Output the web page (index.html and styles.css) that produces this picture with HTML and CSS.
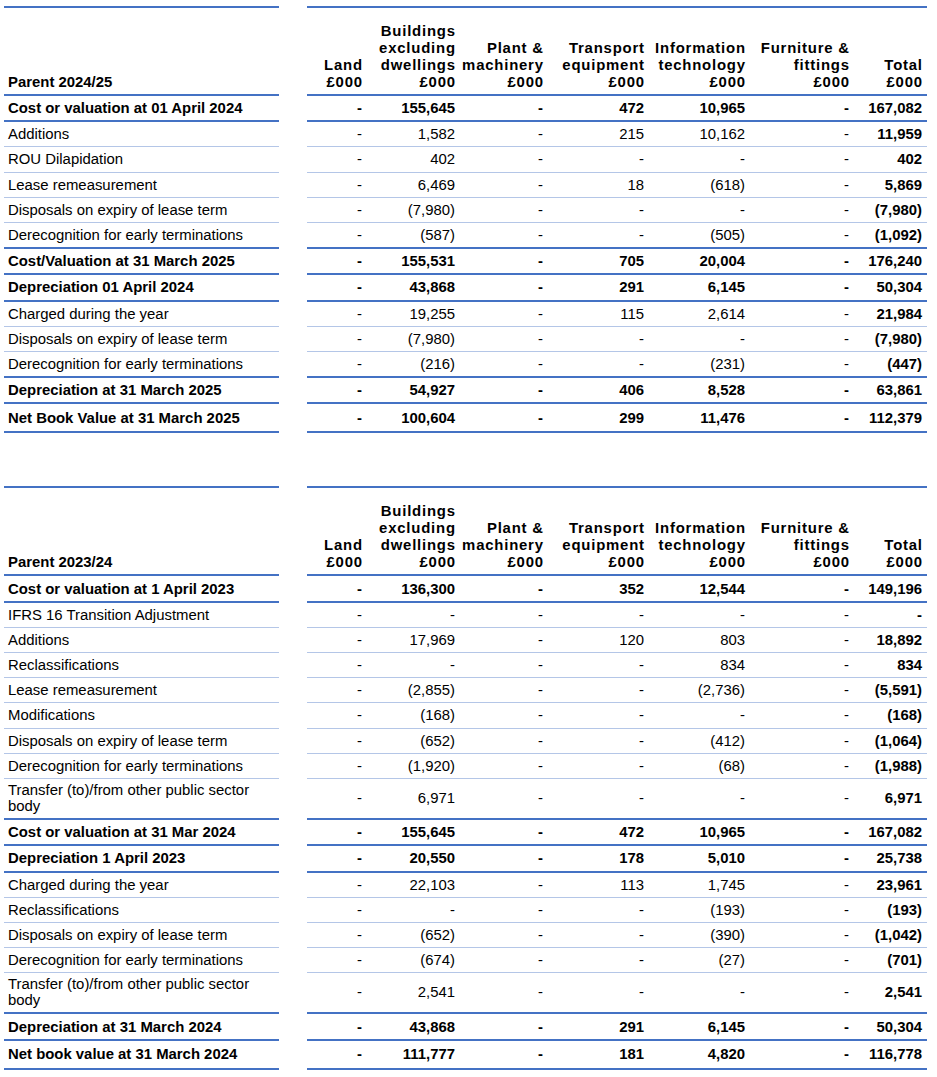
FILE: index.html
```html
<!DOCTYPE html>
<html lang="en">
<head>
<meta charset="utf-8">
<title>Parent right of use assets</title>
<link rel="stylesheet" href="styles.css">
</head>
<body>
<table class="tbl">
  <colgroup>
    <col class="c-lbl"><col class="c-sp"><col class="c-land"><col class="c-bld"><col class="c-plant"><col class="c-trans"><col class="c-it"><col class="c-furn"><col class="c-tot">
  </colgroup>
  <thead>
    <tr>
      <th class="lbl">Parent 2024/25</th><th class="sp"></th>
      <th class="num hd">Land<br>£000</th>
      <th class="num hd">Buildings<br>excluding<br>dwellings<br>£000</th>
      <th class="num hd">Plant &amp;<br>machinery<br>£000</th>
      <th class="num hd">Transport<br>equipment<br>£000</th>
      <th class="num hd">Information<br>technology<br>£000</th>
      <th class="num hd">Furniture &amp;<br>fittings<br>£000</th>
      <th class="num hd">Total<br>£000</th>
    </tr>
  </thead>
  <tbody>
    <tr class="b k"><td class="lbl">Cost or valuation at 01 April 2024</td><td class="sp"></td><td class="num">-</td><td class="num">155,645</td><td class="num">-</td><td class="num">472</td><td class="num">10,965</td><td class="num">-</td><td class="num t">167,082</td></tr>
    <tr><td class="lbl">Additions</td><td class="sp"></td><td class="num">-</td><td class="num">1,582</td><td class="num">-</td><td class="num">215</td><td class="num">10,162</td><td class="num">-</td><td class="num t">11,959</td></tr>
    <tr><td class="lbl">ROU Dilapidation</td><td class="sp"></td><td class="num">-</td><td class="num">402</td><td class="num">-</td><td class="num">-</td><td class="num">-</td><td class="num">-</td><td class="num t">402</td></tr>
    <tr><td class="lbl">Lease remeasurement</td><td class="sp"></td><td class="num">-</td><td class="num">6,469</td><td class="num">-</td><td class="num">18</td><td class="num">(618)</td><td class="num">-</td><td class="num t">5,869</td></tr>
    <tr><td class="lbl">Disposals on expiry of lease term</td><td class="sp"></td><td class="num">-</td><td class="num">(7,980)</td><td class="num">-</td><td class="num">-</td><td class="num">-</td><td class="num">-</td><td class="num t">(7,980)</td></tr>
    <tr class="k"><td class="lbl">Derecognition for early terminations</td><td class="sp"></td><td class="num">-</td><td class="num">(587)</td><td class="num">-</td><td class="num">-</td><td class="num">(505)</td><td class="num">-</td><td class="num t">(1,092)</td></tr>
    <tr class="b k"><td class="lbl">Cost/Valuation at 31 March 2025</td><td class="sp"></td><td class="num">-</td><td class="num">155,531</td><td class="num">-</td><td class="num">705</td><td class="num">20,004</td><td class="num">-</td><td class="num t">176,240</td></tr>
    <tr class="b k"><td class="lbl">Depreciation 01 April 2024</td><td class="sp"></td><td class="num">-</td><td class="num">43,868</td><td class="num">-</td><td class="num">291</td><td class="num">6,145</td><td class="num">-</td><td class="num t">50,304</td></tr>
    <tr><td class="lbl">Charged during the year</td><td class="sp"></td><td class="num">-</td><td class="num">19,255</td><td class="num">-</td><td class="num">115</td><td class="num">2,614</td><td class="num">-</td><td class="num t">21,984</td></tr>
    <tr><td class="lbl">Disposals on expiry of lease term</td><td class="sp"></td><td class="num">-</td><td class="num">(7,980)</td><td class="num">-</td><td class="num">-</td><td class="num">-</td><td class="num">-</td><td class="num t">(7,980)</td></tr>
    <tr class="k"><td class="lbl">Derecognition for early terminations</td><td class="sp"></td><td class="num">-</td><td class="num">(216)</td><td class="num">-</td><td class="num">-</td><td class="num">(231)</td><td class="num">-</td><td class="num t">(447)</td></tr>
    <tr class="b k"><td class="lbl">Depreciation at 31 March 2025</td><td class="sp"></td><td class="num">-</td><td class="num">54,927</td><td class="num">-</td><td class="num">406</td><td class="num">8,528</td><td class="num">-</td><td class="num t">63,861</td></tr>
    <tr class="b k last"><td class="lbl">Net Book Value at 31 March 2025</td><td class="sp"></td><td class="num">-</td><td class="num">100,604</td><td class="num">-</td><td class="num">299</td><td class="num">11,476</td><td class="num">-</td><td class="num t">112,379</td></tr>
  </tbody>
</table>

<table class="tbl">
  <colgroup>
    <col class="c-lbl"><col class="c-sp"><col class="c-land"><col class="c-bld"><col class="c-plant"><col class="c-trans"><col class="c-it"><col class="c-furn"><col class="c-tot">
  </colgroup>
  <thead>
    <tr>
      <th class="lbl">Parent 2023/24</th><th class="sp"></th>
      <th class="num hd">Land<br>£000</th>
      <th class="num hd">Buildings<br>excluding<br>dwellings<br>£000</th>
      <th class="num hd">Plant &amp;<br>machinery<br>£000</th>
      <th class="num hd">Transport<br>equipment<br>£000</th>
      <th class="num hd">Information<br>technology<br>£000</th>
      <th class="num hd">Furniture &amp;<br>fittings<br>£000</th>
      <th class="num hd">Total<br>£000</th>
    </tr>
  </thead>
  <tbody>
    <tr class="b k"><td class="lbl">Cost or valuation at 1 April 2023</td><td class="sp"></td><td class="num">-</td><td class="num">136,300</td><td class="num">-</td><td class="num">352</td><td class="num">12,544</td><td class="num">-</td><td class="num t">149,196</td></tr>
    <tr><td class="lbl">IFRS 16 Transition Adjustment</td><td class="sp"></td><td class="num">-</td><td class="num">-</td><td class="num">-</td><td class="num">-</td><td class="num">-</td><td class="num">-</td><td class="num t">-</td></tr>
    <tr><td class="lbl">Additions</td><td class="sp"></td><td class="num">-</td><td class="num">17,969</td><td class="num">-</td><td class="num">120</td><td class="num">803</td><td class="num">-</td><td class="num t">18,892</td></tr>
    <tr><td class="lbl">Reclassifications</td><td class="sp"></td><td class="num">-</td><td class="num">-</td><td class="num">-</td><td class="num">-</td><td class="num">834</td><td class="num">-</td><td class="num t">834</td></tr>
    <tr><td class="lbl">Lease remeasurement</td><td class="sp"></td><td class="num">-</td><td class="num">(2,855)</td><td class="num">-</td><td class="num">-</td><td class="num">(2,736)</td><td class="num">-</td><td class="num t">(5,591)</td></tr>
    <tr><td class="lbl">Modifications</td><td class="sp"></td><td class="num">-</td><td class="num">(168)</td><td class="num">-</td><td class="num">-</td><td class="num">-</td><td class="num">-</td><td class="num t">(168)</td></tr>
    <tr><td class="lbl">Disposals on expiry of lease term</td><td class="sp"></td><td class="num">-</td><td class="num">(652)</td><td class="num">-</td><td class="num">-</td><td class="num">(412)</td><td class="num">-</td><td class="num t">(1,064)</td></tr>
    <tr><td class="lbl">Derecognition for early terminations</td><td class="sp"></td><td class="num">-</td><td class="num">(1,920)</td><td class="num">-</td><td class="num">-</td><td class="num">(68)</td><td class="num">-</td><td class="num t">(1,988)</td></tr>
    <tr class="k two"><td class="lbl">Transfer (to)/from other public sector body</td><td class="sp"></td><td class="num">-</td><td class="num">6,971</td><td class="num">-</td><td class="num">-</td><td class="num">-</td><td class="num">-</td><td class="num t">6,971</td></tr>
    <tr class="b k"><td class="lbl">Cost or valuation at 31 Mar 2024</td><td class="sp"></td><td class="num">-</td><td class="num">155,645</td><td class="num">-</td><td class="num">472</td><td class="num">10,965</td><td class="num">-</td><td class="num t">167,082</td></tr>
    <tr class="b k"><td class="lbl">Depreciation 1 April 2023</td><td class="sp"></td><td class="num">-</td><td class="num">20,550</td><td class="num">-</td><td class="num">178</td><td class="num">5,010</td><td class="num">-</td><td class="num t">25,738</td></tr>
    <tr><td class="lbl">Charged during the year</td><td class="sp"></td><td class="num">-</td><td class="num">22,103</td><td class="num">-</td><td class="num">113</td><td class="num">1,745</td><td class="num">-</td><td class="num t">23,961</td></tr>
    <tr><td class="lbl">Reclassifications</td><td class="sp"></td><td class="num">-</td><td class="num">-</td><td class="num">-</td><td class="num">-</td><td class="num">(193)</td><td class="num">-</td><td class="num t">(193)</td></tr>
    <tr><td class="lbl">Disposals on expiry of lease term</td><td class="sp"></td><td class="num">-</td><td class="num">(652)</td><td class="num">-</td><td class="num">-</td><td class="num">(390)</td><td class="num">-</td><td class="num t">(1,042)</td></tr>
    <tr><td class="lbl">Derecognition for early terminations</td><td class="sp"></td><td class="num">-</td><td class="num">(674)</td><td class="num">-</td><td class="num">-</td><td class="num">(27)</td><td class="num">-</td><td class="num t">(701)</td></tr>
    <tr class="k two"><td class="lbl">Transfer (to)/from other public sector body</td><td class="sp"></td><td class="num">-</td><td class="num">2,541</td><td class="num">-</td><td class="num">-</td><td class="num">-</td><td class="num">-</td><td class="num t">2,541</td></tr>
    <tr class="b k"><td class="lbl">Depreciation at 31 March 2024</td><td class="sp"></td><td class="num">-</td><td class="num">43,868</td><td class="num">-</td><td class="num">291</td><td class="num">6,145</td><td class="num">-</td><td class="num t">50,304</td></tr>
    <tr class="b k last"><td class="lbl">Net book value at 31 March 2024</td><td class="sp"></td><td class="num">-</td><td class="num">111,777</td><td class="num">-</td><td class="num">181</td><td class="num">4,820</td><td class="num">-</td><td class="num t">116,778</td></tr>
  </tbody>
</table>
</body>
</html>
```

FILE: styles.css
```css
body {
  margin: 0;
  padding: 6px 0 0 4px;
  background: #ffffff;
  color: #000000;
  font-family: "Liberation Sans", Arial, sans-serif;
  font-size: 14.9px;
}

.tbl {
  border-collapse: separate;
  border-spacing: 0;
  table-layout: fixed;
  width: 923px;
}

.tbl + .tbl {
  margin-top: 53px;
}

.c-lbl { width: 275px; }
.c-sp { width: 28px; }
.c-land { width: 60px; }
.c-bld { width: 93px; }
.c-plant { width: 88px; }
.c-trans { width: 101px; }
.c-it { width: 101px; }
.c-furn { width: 104px; }
.c-tot { width: 73px; }

.tbl td {
  padding: 4.1px 5px 4.1px 4px;
  line-height: 16px;
  border-bottom: 1px solid #b4c6e7;
  vertical-align: middle;
  white-space: normal;
}

.tbl td.num {
  text-align: right;
  padding-right: 5px;
  padding-left: 2px;
  white-space: nowrap;
}

.tbl td.lbl {
  padding-left: 4px;
  padding-right: 4px;
}

.tbl th {
  padding: 14.5px 5px 3.5px 4px;
  line-height: 17px;
  font-weight: bold;
  vertical-align: bottom;
  border-top: 2px solid #4472c4;
  border-bottom: 2px solid #4472c4;
}

.tbl th.lbl {
  text-align: left;
}

.tbl th.hd {
  text-align: right;
  padding-left: 0;
  padding-right: 4.2px;
  letter-spacing: 0.8px;
  white-space: nowrap;
}

.tbl th.sp,
.tbl td.sp {
  border: none;
  padding: 0;
}

.tbl tr.k td {
  border-bottom: 2px solid #4472c4;
}

.tbl tr.k td.sp {
  border: none;
}

.tbl tr.b td {
  font-weight: bold;
}

.tbl td.t {
  font-weight: bold;
}

.tbl tr.two td {
  line-height: 15.5px;
}

.tbl tr.last td {
  padding-top: 5.6px;
  padding-bottom: 5.6px;
}
```
